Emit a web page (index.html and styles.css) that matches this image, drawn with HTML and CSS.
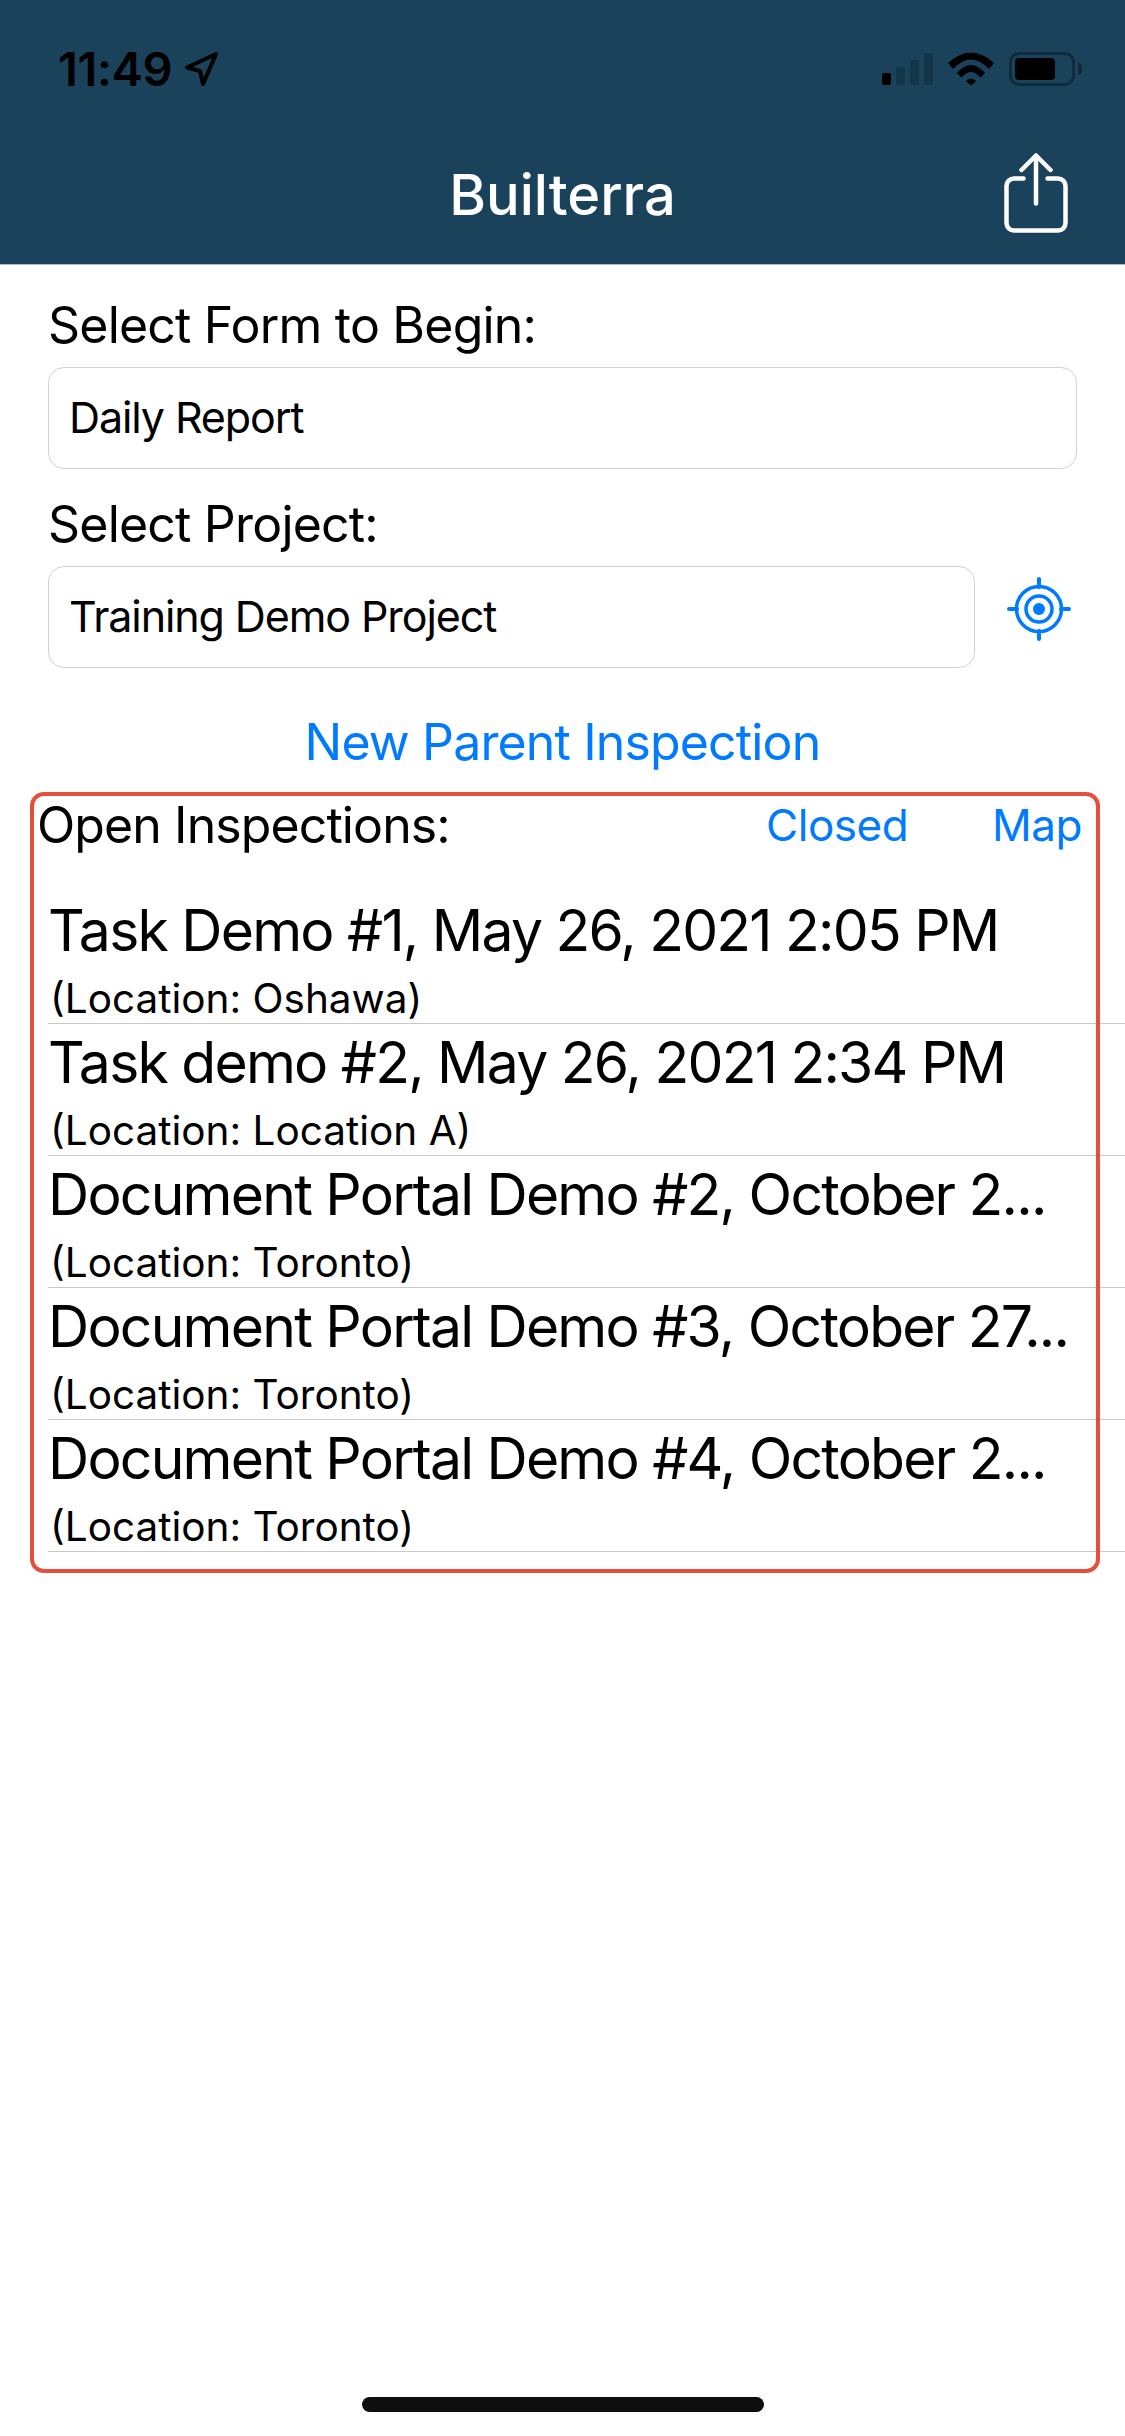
FILE: index.html
```html
<!DOCTYPE html>
<html>
    <head>
        <meta charset="utf-8">
        <meta name="viewport" content="width=device-width,initial-scale=1.0">
        <title>Builterra</title>
        <link rel="stylesheet" href="styles.css">
    </head>
    <body>
        <header class="appHeader">
            <div class="statusBar">
                <div class="statusLeft">
                    <span class="clock">11:49</span>
                    <svg class="locationArrow" width="36" height="36" viewBox="0 0 36 36">
                        <path d="M33 3 L4 16.5 L17 20 L20 33 Z" fill="none" stroke="#000" stroke-width="4" stroke-linejoin="round"/>
                    </svg>
                </div>
                <div class="statusRight">
                    <div class="signal">
                        <span class="bar bar1"></span>
                        <span class="bar bar2"></span>
                        <span class="bar bar3"></span>
                        <span class="bar bar4"></span>
                    </div>
                    <svg class="wifi" width="46" height="34" viewBox="0 0 46 34">
                        <path d="M0 11 Q23 -10 46 11 L41 17 Q23 -2 5 17 Z" fill="#000"/>
                        <path d="M9 21 Q23 5 37 21 L32.5 25.5 Q23 14.5 13.5 25.5 Z" fill="#000"/>
                        <path d="M18 29 Q23 24 28 29 L23 33.5 Z" fill="#000"/>
                    </svg>
                    <div class="battery">
                        <div class="batteryCase"><div class="batteryLevel"></div></div>
                        <div class="batteryNub"></div>
                    </div>
                </div>
            </div>
            <div class="navBar">
                <h1 class="navTitle">Builterra</h1>
                <svg class="shareIcon" width="64" height="82" viewBox="0 0 64 82">
                    <path d="M19.5 25.5 H10 A7.5 7.5 0 0 0 2.5 33 V70 A7.5 7.5 0 0 0 10 77.5 H54 A7.5 7.5 0 0 0 61.5 70 V33 A7.5 7.5 0 0 0 54 25.5 H43.5" fill="none" stroke="#fff" stroke-width="4.5" stroke-linecap="round"/>
                    <path d="M32 50.5 V3 M17.5 17 L32 2.5 L46.5 17" fill="none" stroke="#fff" stroke-width="4.5" stroke-linecap="round" stroke-linejoin="round"/>
                </svg>
            </div>
        </header>

        <main>
            <div class="formBlock">
                <label class="fieldLabel">Select Form to Begin:</label>
                <div class="fieldBox">Daily Report</div>

                <label class="fieldLabel second">Select Project:</label>
                <div class="fieldRow">
                    <div class="fieldBox">Training Demo Project</div>
                    <svg class="targetIcon" width="64" height="64" viewBox="0 0 64 64">
                        <circle cx="32" cy="32" r="22.5" fill="none" stroke="#007aff" stroke-width="3.5"/>
                        <circle cx="32" cy="32" r="13" fill="none" stroke="#007aff" stroke-width="3.5"/>
                        <circle cx="32" cy="32" r="6" fill="#007aff"/>
                        <path d="M32 2 V10 M32 54 V62 M2 32 H10 M54 32 H62" stroke="#007aff" stroke-width="4" stroke-linecap="round"/>
                    </svg>
                </div>
            </div>

            <div class="newInspection">New Parent Inspection</div>

            <section class="inspections">
                <div class="inspectionsHead">
                    <span class="headTitle">Open Inspections:</span>
                    <span class="headLinks">
                        <span class="headLink">Closed</span>
                        <span class="headLink">Map</span>
                    </span>
                </div>
                <ul class="inspectionList">
                    <li class="inspectionRow">
                        <div class="rowTitle">Task Demo #1, May 26, 2021 2:05 PM</div>
                        <div class="rowSub">(Location: Oshawa)</div>
                    </li>
                    <li class="inspectionRow">
                        <div class="rowTitle">Task demo #2, May 26, 2021 2:34 PM</div>
                        <div class="rowSub">(Location: Location A)</div>
                    </li>
                    <li class="inspectionRow">
                        <div class="rowTitle">Document Portal Demo #2, October 2...</div>
                        <div class="rowSub">(Location: Toronto)</div>
                    </li>
                    <li class="inspectionRow">
                        <div class="rowTitle">Document Portal Demo #3, October 27...</div>
                        <div class="rowSub">(Location: Toronto)</div>
                    </li>
                    <li class="inspectionRow">
                        <div class="rowTitle">Document Portal Demo #4, October 2...</div>
                        <div class="rowSub">(Location: Toronto)</div>
                    </li>
                </ul>
                <div class="highlightBox"></div>
            </section>
        </main>

        <div class="homeIndicator"></div>
    </body>
</html>
```

FILE: styles.css
```css
html, body {
    margin: 0;
    padding: 0;
    background-color: #fff;
    font-family: "Inter", "Liberation Sans", sans-serif;
    color: #000;
}

body {
    width: 1125px;
    height: 2436px;
    overflow: hidden;
    position: relative;
}

.appHeader {
    box-sizing: border-box;
    height: 265px;
    background-color: #1a425b;
    border-bottom: 1px solid #b8bcc0;
}

.statusBar {
    display: flex;
    justify-content: space-between;
    align-items: center;
    box-sizing: border-box;
    height: 138px;
    padding: 0 43px 0 58px;
}

.statusLeft {
    display: flex;
    align-items: center;
    gap: 11px;
}

.clock {
    font-size: 47px;
    font-weight: 600;
    line-height: 36px;
    letter-spacing: -0.4px;
}

.statusRight {
    display: flex;
    align-items: flex-end;
    gap: 15px;
}

.signal {
    display: flex;
    align-items: flex-end;
    gap: 5px;
    height: 33px;
    margin-bottom: 1px;
}

.bar {
    display: block;
    width: 9px;
    border-radius: 2px;
    background-color: rgba(0, 0, 0, 0.2);
}

.bar1 {
    height: 12px;
    background-color: #000;
}

.bar2 {
    height: 18px;
}

.bar3 {
    height: 25px;
}

.bar4 {
    height: 32px;
}

.battery {
    display: flex;
    align-items: center;
    gap: 3px;
}

.batteryCase {
    box-sizing: border-box;
    width: 66px;
    height: 34px;
    padding: 3px;
    border: 3px solid rgba(0, 0, 0, 0.35);
    border-radius: 10px;
}

.batteryLevel {
    width: 40px;
    height: 22px;
    border-radius: 4px;
    background-color: #000;
}

.batteryNub {
    width: 4px;
    height: 12px;
    border-radius: 0 4px 4px 0;
    background-color: rgba(0, 0, 0, 0.35);
}

.navBar {
    position: relative;
    display: flex;
    justify-content: center;
    align-items: flex-start;
    height: 126px;
}

.navTitle {
    margin: 0;
    font-size: 56px;
    font-weight: 500;
    line-height: 114px;
}

.navBar .navTitle {
    color: #fff;
}

.shareIcon {
    position: absolute;
    top: 15px;
    right: 57px;
}

.formBlock {
    padding: 30px 48px 0;
}

.fieldLabel {
    display: block;
    margin-bottom: 12px;
    font-size: 50px;
    line-height: 60px;
    letter-spacing: -0.8px;
}

.fieldLabel.second {
    margin-top: 25px;
    margin-bottom: 12px;
}

.fieldBox {
    box-sizing: border-box;
    height: 102px;
    padding-left: 20px;
    border: 1.5px solid #d2d2d2;
    border-radius: 16px;
    font-size: 43px;
    line-height: 99px;
    letter-spacing: -1.1px;
}

.fieldRow {
    display: flex;
    align-items: flex-start;
    gap: 32px;
}

.fieldRow .fieldBox {
    width: 927px;
}

.targetIcon {
    margin-top: 11px;
}

.newInspection {
    margin-top: 44px;
    font-size: 50px;
    line-height: 60px;
    letter-spacing: -0.85px;
    text-align: center;
    color: #007aff;
}

.inspections {
    position: relative;
    margin-top: 20px;
}

.inspectionsHead {
    display: flex;
    justify-content: space-between;
    align-items: flex-start;
    box-sizing: border-box;
    height: 100px;
    padding: 3px 43px 0 37px;
}

.headTitle {
    font-size: 50px;
    line-height: 60px;
    letter-spacing: -0.9px;
}

.headLinks {
    display: flex;
    gap: 84px;
}

.headLink {
    font-size: 44px;
    line-height: 60px;
    letter-spacing: -0.5px;
    color: #007aff;
}

.inspectionList {
    margin: 0 0 0 48px;
    padding: 0;
    list-style: none;
}

.inspectionRow {
    box-sizing: border-box;
    height: 132px;
    border-bottom: 1.5px solid #c8c8c8;
}

.rowTitle {
    white-space: nowrap;
    font-size: 57px;
    line-height: 78px;
    letter-spacing: -1.75px;
}

.rowSub {
    margin-top: 4px;
    padding-left: 2px;
    font-size: 40.5px;
    line-height: 50px;
}

.highlightBox {
    position: absolute;
    top: 0;
    left: 30px;
    box-sizing: border-box;
    width: 1070px;
    height: 781px;
    border: 4px solid #e74f3d;
    border-radius: 14px;
    pointer-events: none;
}

.homeIndicator {
    position: absolute;
    left: 362px;
    top: 2397px;
    width: 402px;
    height: 15px;
    border-radius: 8px;
    background-color: #0e0e0e;
}
```
